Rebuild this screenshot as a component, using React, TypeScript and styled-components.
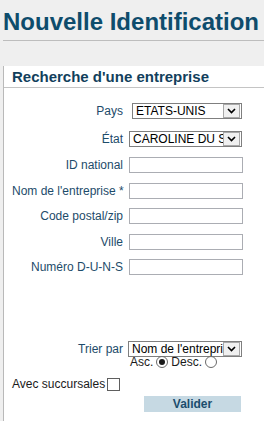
import React from 'react';
import styled, { createGlobalStyle } from 'styled-components';

const GlobalStyle = createGlobalStyle`
  html, body {
    margin: 0;
    padding: 0;
  }
  body {
    background: #efefef;
    font-family: 'Liberation Sans', Arial, sans-serif;
    overflow: hidden;
  }
`;

const Page = styled.div`
  width: 264px;
  height: 421px;
  overflow: hidden;
  padding-left: 3px;
  box-sizing: border-box;
`;

const TitleBar = styled.div`
  border-bottom: 1px solid #bdbdbd;
  padding-bottom: 4px;
`;

const Title = styled.h1`
  margin: 8px 0 0;
  font-size: 24px;
  line-height: 28px;
  font-weight: bold;
  color: #0e4c6c;
  white-space: nowrap;
`;

const Panel = styled.section`
  margin-top: 25px;
  width: 420px;
  min-height: 400px;
  background: #fff;
  border-left: 1px solid #b9b9b9;
`;

const PanelHeader = styled.div`
  display: flex;
  padding: 2px 0 1px;
  border-bottom: 1px solid #c4c4c4;
`;

const HeaderCell = styled.h2<{ $width?: number }>`
  margin: 0;
  flex: 0 0 ${(p) => (p.$width ? `${p.$width}px` : 'auto')};
  box-sizing: border-box;
  padding-left: 8px;
  font-size: 15px;
  line-height: 18px;
  font-weight: bold;
  color: #123f5c;
  white-space: nowrap;
`;

const FormGrid = styled.div<{ $top: number }>`
  display: grid;
  grid-template-columns: 111px 114px;
  column-gap: 6px;
  row-gap: 9.5px;
  align-items: center;
  padding: ${(p) => p.$top}px 0 0 8px;
`;

const SortGrid = styled(FormGrid)`
  row-gap: 0;
`;

const Label = styled.label`
  font-size: 12px;
  line-height: 14px;
  color: #1d4b6a;
  text-align: right;
  white-space: nowrap;
`;

const SelectBox = styled.div<{ $width: number }>`
  justify-self: end;
  display: flex;
  align-items: center;
  width: ${(p) => p.$width}px;
  height: 16px;
  margin: 1px 1px 1px 0;
  box-sizing: border-box;
  border: 1px solid #7f7f7f;
  background: #fff;
`;

const NativeSelect = styled.select`
  appearance: none;
  flex: 1;
  min-width: 0;
  height: 14px;
  border: none;
  outline: none;
  padding: 0 0 0 3px;
  margin: 0;
  background: transparent;
  font-family: 'Liberation Sans', Arial, sans-serif;
  font-size: 12px;
  line-height: 14px;
  color: #000;
`;

const ArrowBox = styled.span`
  display: flex;
  align-items: center;
  justify-content: center;
  width: 15px;
  height: 12px;
  margin-right: 1px;
  border: 1px solid #a8a8a8;
  background: #f0f0f0;
`;

const TextInput = styled.input`
  width: 114px;
  height: 16px;
  box-sizing: border-box;
  margin: 0;
  padding: 0 2px;
  border: 1px solid #abadb3;
  background: #fff;
  font-family: 'Liberation Sans', Arial, sans-serif;
  font-size: 12px;
`;

const RadioRow = styled.div`
  grid-column: 2;
  display: flex;
  align-items: center;
  gap: 3px;
  height: 12px;
  margin-top: -2px;
  padding-left: 1px;
  font-size: 12px;
  color: #1a1a1a;
`;

const Radio = styled.input.attrs({ type: 'radio' })`
  appearance: none;
  width: 12px;
  height: 12px;
  margin: 0;
  border: 1px solid #6a6a6a;
  border-radius: 50%;
  background: #fff;
  box-sizing: border-box;
  display: grid;
  place-items: center;

  &:checked::after {
    content: '';
    width: 6px;
    height: 6px;
    border-radius: 50%;
    background: #1a1a1a;
  }
`;

const CheckRow = styled.div`
  grid-column: 1 / -1;
  display: flex;
  align-items: center;
  gap: 2px;
  margin-top: 9px;
  font-size: 12px;
  line-height: 14px;
  color: #1a1a1a;
`;

const Checkbox = styled.input.attrs({ type: 'checkbox' })`
  appearance: none;
  width: 13px;
  height: 13px;
  margin: 0;
  border: 1px solid #5e5e5e;
  background: #fff;
  box-sizing: border-box;
`;

const SubmitButton = styled.button`
  grid-column: 2;
  justify-self: end;
  width: 97px;
  height: 16px;
  margin: 5px 2px 0 0;
  padding: 0;
  border: none;
  background: #c6d9e3;
  font-family: 'Liberation Sans', Arial, sans-serif;
  font-size: 12px;
  font-weight: bold;
  line-height: 16px;
  color: #1b4d6d;
`;

const Chevron = () => (
  <svg width="9" height="6" viewBox="0 0 9 6">
    <path d="M1 1 L4.5 4.5 L8 1" fill="none" stroke="#000" strokeWidth="1.6" />
  </svg>
);

const Dropdown = ({ width, value }: { width: number; value: string }) => (
  <SelectBox $width={width}>
    <NativeSelect defaultValue={value}>
      <option>{value}</option>
    </NativeSelect>
    <ArrowBox>
      <Chevron />
    </ArrowBox>
  </SelectBox>
);

const fields = ['ID national', "Nom de l'entreprise *", 'Code postal/zip', 'Ville', 'Numéro D-U-N-S'];

export default function App() {
  return (
    <Page>
      <GlobalStyle />
      <TitleBar>
        <Title>Nouvelle Identification</Title>
      </TitleBar>
      <Panel>
        <PanelHeader>
          <HeaderCell $width={258}>Recherche d'une entreprise</HeaderCell>
          <HeaderCell>Résultats</HeaderCell>
        </PanelHeader>
        <FormGrid $top={14}>
          <Label>Pays</Label>
          <Dropdown width={110} value="ETATS-UNIS" />
          <Label>État</Label>
          <Dropdown width={113} value="CAROLINE DU SUD" />
          {fields.map((f) => (
            <React.Fragment key={f}>
              <Label>{f}</Label>
              <TextInput type="text" />
            </React.Fragment>
          ))}
        </FormGrid>
        <SortGrid $top={65}>
          <Label>Trier par</Label>
          <Dropdown width={114} value="Nom de l'entreprise" />
          <RadioRow>
            Asc. <Radio name="order" defaultChecked /> Desc. <Radio name="order" />
          </RadioRow>
          <CheckRow>
            Avec succursales <Checkbox />
          </CheckRow>
          <SubmitButton type="button">Valider</SubmitButton>
        </SortGrid>
      </Panel>
    </Page>
  );
}
